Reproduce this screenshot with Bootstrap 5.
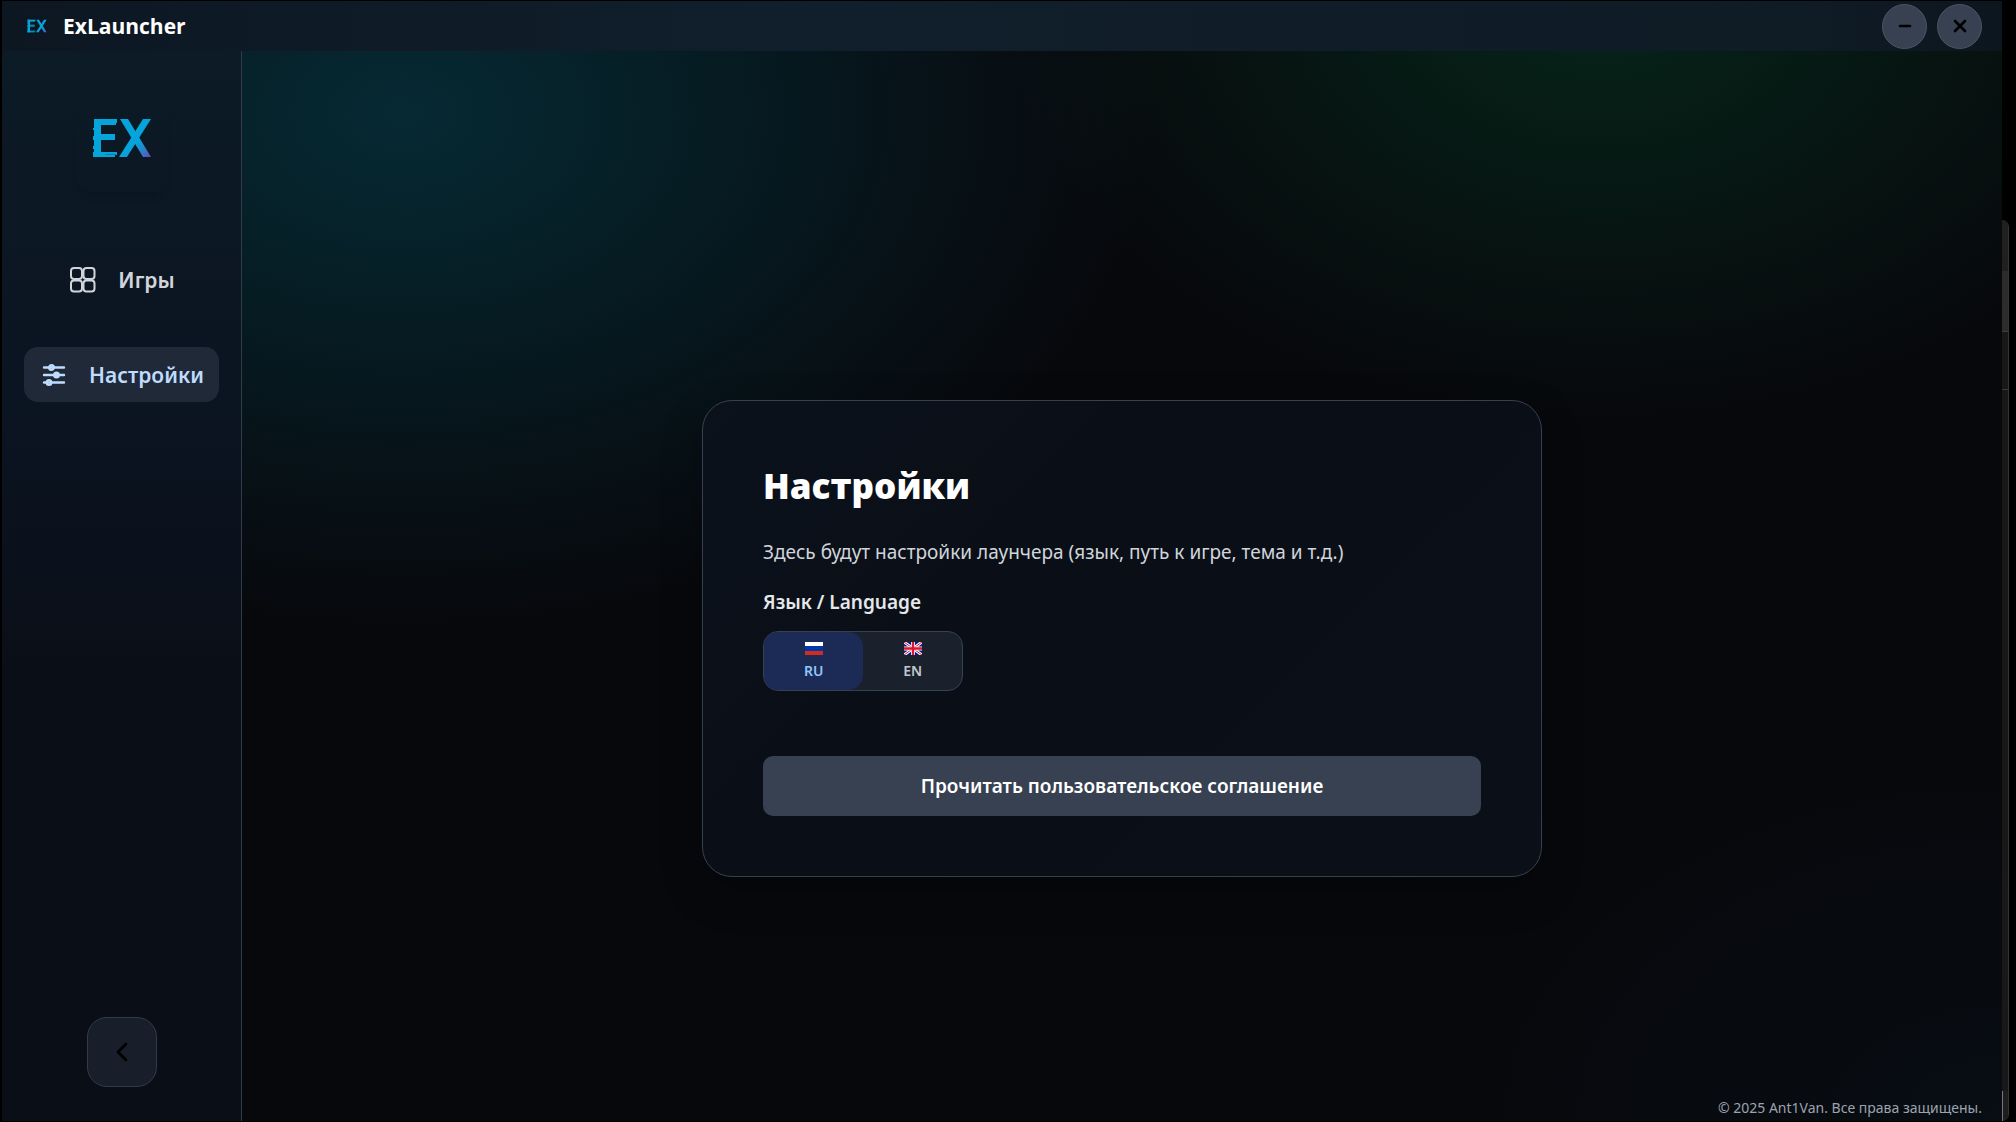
<!DOCTYPE html>
<html lang="ru" data-bs-theme="dark">
<head>
<meta charset="utf-8">
<meta name="viewport" content="width=device-width, initial-scale=1">
<title>ExLauncher</title>
<link href="https://cdn.jsdelivr.net/npm/bootstrap@5.3.0/dist/css/bootstrap.min.css" rel="stylesheet">
<style>
  body { background: #000; font-family: "Noto Sans", sans-serif; color: #d1d5db; overflow: hidden; }
  .launcher {
    margin: 1px 0 1px 2px;
    background:
      radial-gradient(1260px 860px at 20% 10%, rgba(0, 176, 208, .2), transparent 60%),
      radial-gradient(1000px 700px at 80% 0%, rgba(0, 200, 100, .15), transparent 60%),
      radial-gradient(900px 600px at 100% 100%, rgba(8, 14, 20, .9), transparent 60%),
      #07080c;
  }
  .desktop { min-height: 100vh; }
  .titlebar { height: 50px; padding: 0 20px 0 25px; background: linear-gradient(90deg, #0c1722, #111f2c 40%, #0f1b25 90%, #0c161f); }
  .app-name { font-size: 21px; line-height: 30px; font-weight: 700; color: #fff; font-family: "Open Sans", sans-serif; }
  .win-controls { gap: 10px; }
  .win-btn { width: 45px; height: 45px; background: #374151; border: 1px solid #4b5563; color: #000; }
  .sidebar { width: 240px; border-right: 1px solid #323c49; padding: 49px 22px 34px; background: linear-gradient(180deg, #0c1b26 0%, #0b1320 38%, #0a0e16 60%, #0a0e16 100%); }
  .logo-tile { width: 92px; height: 92px; padding-bottom: 16px; border-radius: 16px; box-shadow: 0 8px 10px -7px rgba(0, 0, 0, .25); }
  .side-nav { gap: 40px; margin-top: 60px; }
  .nav-item-btn { height: 55px; padding: 0 15px; gap: 22px; border-radius: 14px; color: #d1d5db; text-decoration: none; font-size: 21px; line-height: 30px; font-weight: 600; }
  .nav-item-btn.current { background: #1f2937; color: #bfdbfe; }
  .back-btn { width: 70px; height: 70px; border-radius: 20px; background: #181f2b; border: 1px solid #323b4b; color: #000; }
  .content-area { padding-top: 105px; }
  .settings-card { width: 840px; max-width: 100%; padding: 60px; border: 1px solid #364150; border-radius: 30px; background: linear-gradient(135deg, #0b121c, #0a0e16 40%, #0b0f18); box-shadow: 0 16px 40px rgba(0, 0, 0, .25); }
  .settings-title { font-family: "Open Sans", sans-serif; font-size: 35px; line-height: 50px; font-weight: 800; color: #fff; margin: 0 0 26px; }
  .settings-text { font-size: 19px; line-height: 30px; margin: 0 0 20px; }
  .lang-label { font-size: 19px; line-height: 30px; font-weight: 600; color: #e5e7eb; margin: 0 0 14px; }
  .lang-switch { width: 200px; height: 60px; border: 1px solid #364150; border-radius: 15px; background: #1a212d; overflow: hidden; }
  .lang-btn { border: 0; padding: 0; gap: 6px; background: transparent; color: #c3c8d0; font-size: 14px; line-height: 20px; font-weight: 600; }
  .lang-btn.current { background: #1c2b55; color: #93c5fd; border-radius: 0 15px 15px 0; }
  .agree-btn { height: 60px; margin-top: 65px; border: 0; border-radius: 10px; background: #374151; color: #fff; font-size: 19px; line-height: 30px; font-weight: 600; }
  .copyright { right: 20px; bottom: 3px; font-size: 14px; line-height: 20px; color: #9ca3af; }
  .behind { width: 14px; }
  .behind-window { width: 7px; margin: 220px 0 1px; border-right: 1px solid #333; border-radius: 0 8px 8px 0; background: #181818; overflow: hidden; }
  .strip-a { height: 51px; background: #202020; }
  .strip-b { height: 61px; background: #2c2c2c; border-bottom: 1px solid #3c3c3c; }
  .strip-c { height: 58px; border-bottom: 1px solid #3c3c3c; }
  .strip-d { height: 30px; background: #1e1e1e; border-left: 1px solid #777; }
</style>
<script src="https://cdn.jsdelivr.net/npm/bootstrap@5.3.0/dist/js/bootstrap.bundle.min.js"></script>
</head>
<body>
<svg width="0" height="0" class="position-absolute" aria-hidden="true">
  <defs>
    <linearGradient id="exFill" gradientUnits="userSpaceOnUse" x1="20" y1="0" x2="58" y2="44">
      <stop offset="0.6" stop-color="#05a4da"/><stop offset="0.78" stop-color="#2f7fcb"/><stop offset="1" stop-color="#7a35b0"/>
    </linearGradient>
    <symbol id="exMark" viewBox="0 0 60 40">
      <g fill="url(#exFill)">
        <rect x="2" y="1" width="7" height="38"/>
        <rect x="2" y="1" width="23" height="4"/><rect x="2" y="5" width="22" height="2"/>
        <rect x="1" y="10" width="2" height="2"/><rect x="1" y="18" width="22" height="4"/><rect x="9" y="16" width="14" height="2"/>
        <rect x="1" y="28" width="2" height="3"/>
        <rect x="1" y="34" width="24" height="3"/><rect x="1" y="36" width="22" height="3"/>
        <polygon points="28,1 36,1 59,39 51,39"/>
        <polygon points="51,1 59,1 35,39 27,39"/>
      </g>
      <path d="M13 36.500h11" stroke="#0b5f80" stroke-width="0.600"/>
    </symbol>
  </defs>
</svg>
<div class="desktop d-flex">
  <div class="launcher d-flex flex-column flex-grow-1 position-relative">
    <header class="titlebar d-flex align-items-center">
      <svg width="20" height="14" aria-hidden="true"><use href="#exMark"/></svg>
      <span class="app-name ms-3">ExLauncher</span>
      <div class="win-controls d-flex ms-auto">
        <button type="button" class="win-btn rounded-circle d-flex align-items-center justify-content-center p-0" aria-label="Свернуть">
          <svg width="14" height="14" viewBox="0 0 14 14" stroke="currentColor" stroke-width="2.6" stroke-linecap="round"><path d="M2 7h10"/></svg>
        </button>
        <button type="button" class="win-btn rounded-circle d-flex align-items-center justify-content-center p-0" aria-label="Закрыть">
          <svg width="14" height="14" viewBox="0 0 14 14" stroke="currentColor" stroke-width="2.6" stroke-linecap="round"><path d="M2 2l10 10M12 2L2 12"/></svg>
        </button>
      </div>
    </header>
    <div class="d-flex flex-grow-1">
      <aside class="sidebar d-flex flex-column align-items-center flex-shrink-0">
        <div class="logo-tile d-flex align-items-center justify-content-center flex-shrink-0">
          <svg width="60" height="40" role="img" aria-label="EX"><use href="#exMark"/></svg>
        </div>
        <nav class="side-nav d-flex flex-column w-100 align-items-center">
          <a href="#" class="nav-item-btn d-flex align-items-center">
            <svg width="28" height="28" viewBox="0 0 28 28" fill="none" stroke="currentColor" stroke-width="2"><rect x="3" y="2" width="11" height="11" rx="3"/><rect x="15.500" y="2" width="11" height="11" rx="3"/><rect x="3" y="14.500" width="11" height="11" rx="3"/><rect x="15.500" y="14.500" width="11" height="11" rx="3"/></svg>
            Игры
          </a>
          <a href="#" class="nav-item-btn current d-flex align-items-center" aria-current="page">
            <svg width="28" height="28" viewBox="0 0 28 28" fill="none" stroke="currentColor" stroke-width="2.400" stroke-linecap="round"><path d="M5 6.500h20M5 14h20M5 21.500h20"/><circle cx="12.500" cy="6.500" r="2.300"/><circle cx="17.500" cy="14" r="2.300"/><circle cx="10" cy="21.500" r="2.300"/></svg>
            Настройки
          </a>
        </nav>
        <button type="button" class="back-btn mt-auto d-flex align-items-center justify-content-center p-0" aria-label="Назад">
          <svg width="12" height="20" viewBox="0 0 12 20" fill="none" stroke="currentColor" stroke-width="2.800" stroke-linecap="round" stroke-linejoin="round"><path d="M10 2L2 10l8 8"/></svg>
        </button>
      </aside>
      <main class="content-area flex-grow-1 d-flex align-items-center justify-content-center">
        <section class="settings-card">
          <h1 class="settings-title">Настройки</h1>
          <p class="settings-text">Здесь будут настройки лаунчера (язык, путь к игре, тема и т.д.)</p>
          <h2 class="lang-label" id="lang">Язык / Language</h2>
          <div class="lang-switch d-flex" role="group" aria-labelledby="lang">
            <button type="button" class="lang-btn current flex-fill d-flex flex-column align-items-center justify-content-center" aria-pressed="true">
              <svg width="18" height="13" viewBox="0 0 18 13" shape-rendering="crispEdges" aria-hidden="true"><path fill="#fff" d="M0 0h18v4H0z"/><path fill="#0039a6" d="M0 4h18v5H0z"/><path fill="#d52b1e" d="M0 9h18v4H0z"/></svg>
              RU
            </button>
            <button type="button" class="lang-btn flex-fill d-flex flex-column align-items-center justify-content-center" aria-pressed="false">
              <svg width="18" height="13" viewBox="0 0 18 13" aria-hidden="true"><path fill="#012189" d="M0 0h18v13H0z"/><path stroke="#fff" stroke-width="3" d="M0 0l18 13M18 0L0 13"/><path stroke="#c8102e" stroke-width="1" d="M0 0l18 13M18 0L0 13"/><path stroke="#fff" stroke-width="4" d="M9 0v13M0 6.500h18"/><path stroke="#dc1436" stroke-width="2.500" d="M9 0v13M0 6.500h18"/></svg>
              EN
            </button>
          </div>
          <button type="button" class="agree-btn w-100">Прочитать пользовательское соглашение</button>
        </section>
      </main>
    </div>
    <footer class="copyright position-absolute">© 2025 Ant1Van. Все права защищены.</footer>
  </div>
  <div class="behind d-flex flex-shrink-0" aria-hidden="true">
    <div class="behind-window d-flex flex-column">
      <div class="strip-a"></div><div class="strip-b"></div><div class="strip-c"></div><div class="strip-d mt-auto"></div>
    </div>
  </div>
</div>
</body>
</html>
